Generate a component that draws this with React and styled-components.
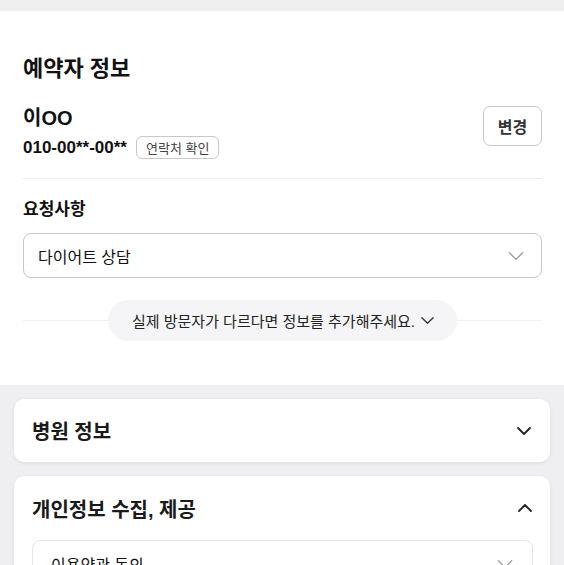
import React from 'react';
import styled, { createGlobalStyle } from 'styled-components';

const GlobalStyle = createGlobalStyle`
  html, body {
    margin: 0;
    padding: 0;
    background: #efeff1;
    font-family: "Liberation Sans", "Noto Sans CJK KR", sans-serif;
    color: #111;
  }
  * { box-sizing: border-box; }
`;

const Page = styled.div`
  width: 564px;
  padding-top: 11px;
`;

const Section = styled.div`
  background: #fff;
  padding: 46px 22px 44px 23px;
`;

const Title = styled.h2`
  margin: 0;
  font-size: 22px;
  font-weight: 700;
  line-height: 24px;
`;

const ReserverRow = styled.div`
  display: flex;
  justify-content: space-between;
  align-items: flex-start;
  margin-top: 25px;
  padding-bottom: 19px;
  border-bottom: 1px solid #ececec;
`;

const Name = styled.div`
  font-size: 20px;
  font-weight: 700;
  line-height: 24px;
`;

const PhoneLine = styled.div`
  display: flex;
  align-items: center;
  gap: 9px;
  margin-top: 6px;
  height: 23px;
`;

const Phone = styled.span`
  font-size: 17px;
  font-weight: 700;
`;

const Tag = styled.span`
  display: inline-flex;
  align-items: center;
  height: 23px;
  border: 1px solid #c8c8c8;
  border-radius: 6px;
  font-size: 13px;
  color: #444;
  padding: 0 9px;
`;

const ChangeButton = styled.button`
  width: 59px;
  height: 40px;
  border: 1px solid #c8c8c8;
  border-radius: 7px;
  background: #fff;
  font-family: inherit;
  font-size: 16px;
  font-weight: 700;
  color: #333;
`;

const SubTitle = styled.h3`
  margin: 21px 0 0;
  font-size: 17px;
  font-weight: 700;
  line-height: 20px;
`;

const Select = styled.div`
  display: flex;
  align-items: center;
  justify-content: space-between;
  margin-top: 13px;
  height: 45px;
  padding: 0 16px 0 14px;
  border: 1px solid #c8c8c8;
  border-radius: 8px;
  font-size: 16px;
  color: #111;
`;

const DividerRow = styled.div`
  display: flex;
  align-items: center;
  margin-top: 22px;
  &::before, &::after {
    content: '';
    flex: 1;
    height: 1px;
    background: #f0f0f0;
  }
`;

const AddPill = styled.div`
  display: flex;
  align-items: center;
  gap: 5px;
  height: 41px;
  padding: 0 22px 0 24px;
  border-radius: 21px;
  background: #f5f5f7;
  font-size: 15px;
  color: #222;
`;

const Cards = styled.div`
  display: flex;
  flex-direction: column;
  gap: 14px;
  padding: 14px 14px 0;
`;

const Card = styled.div`
  background: #fff;
  border-radius: 10px;
  box-shadow: 0 1px 4px rgba(0, 0, 0, 0.08);
  padding: ${p => (p.$open ? '18px 17px 0 18px' : '0 18px')};
`;

const CardHead = styled.div`
  display: flex;
  align-items: center;
  justify-content: space-between;
  height: ${p => (p.$open ? '28px' : '63px')};
`;

const CardTitle = styled.div`
  font-size: 20px;
  font-weight: 700;
  color: #1a1a1a;
`;

const InnerBox = styled.div`
  display: flex;
  align-items: center;
  justify-content: space-between;
  margin-top: 18px;
  height: 48px;
  padding: 0 18px;
  border: 1px solid #e6e6e6;
  border-radius: 8px;
  font-size: 16px;
`;

const Chevron = ({ up, size = 16, color = '#222', width = 1.8 }) => (
  <svg width={size} height={size} viewBox="0 0 16 16" fill="none">
    <path
      d={up ? 'M2 11 L8 5 L14 11' : 'M2 5 L8 11 L14 5'}
      stroke={color}
      strokeWidth={width}
      strokeLinecap="round"
      strokeLinejoin="round"
    />
  </svg>
);

export default function App() {
  return (
    <Page>
      <GlobalStyle />
      <Section>
        <Title>예약자 정보</Title>
        <ReserverRow>
          <div>
            <Name>이OO</Name>
            <PhoneLine>
              <Phone>010-00**-00**</Phone>
              <Tag>연락처 확인</Tag>
            </PhoneLine>
          </div>
          <ChangeButton>변경</ChangeButton>
        </ReserverRow>
        <SubTitle>요청사항</SubTitle>
        <Select>
          <span>다이어트 상담</span>
          <Chevron size={18} color="#999" width={1.2} />
        </Select>
        <DividerRow>
          <AddPill>
            실제 방문자가 다르다면 정보를 추가해주세요.
            <Chevron size={15} color="#333" width={1.4} />
          </AddPill>
        </DividerRow>
      </Section>
      <Cards>
        <Card>
          <CardHead>
            <CardTitle>병원 정보</CardTitle>
            <Chevron />
          </CardHead>
        </Card>
        <Card $open>
          <CardHead $open>
            <CardTitle>개인정보 수집, 제공</CardTitle>
            <Chevron up />
          </CardHead>
          <InnerBox>
            <span>이용약관 동의</span>
            <Chevron size={18} color="#999" width={1.2} />
          </InnerBox>
        </Card>
      </Cards>
    </Page>
  );
}
